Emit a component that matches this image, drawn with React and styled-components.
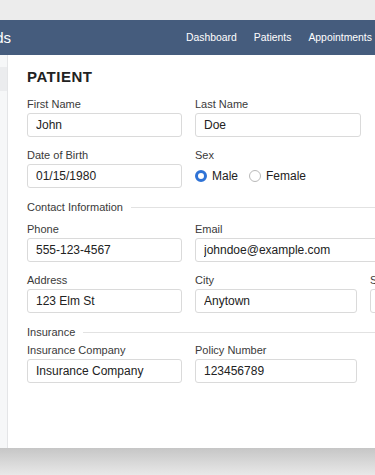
import styled, { createGlobalStyle } from "styled-components"

const Global = createGlobalStyle`
  html, body {
    margin: 0;
    padding: 0;
    background: #ececec;
    overflow: hidden;
  }
  body {
    font-family: "Liberation Sans", Arial, sans-serif;
  }
`

const Page = styled.div`
  display: flex;
  flex-direction: column;
  width: 375px;
  height: 475px;
  overflow: hidden;
`

const TopGap = styled.div`
  flex: none;
  height: 20px;
  background: #ececec;
`

const Window = styled.div`
  flex: none;
  display: flex;
  flex-direction: column;
  width: 480px;
  height: 428px;
  background: #fff;
`

const Header = styled.header`
  flex: none;
  display: flex;
  align-items: center;
  height: 35px;
  background: #455c7d;
  color: #fff;
`

const Brand = styled.div`
  width: 11px;
  overflow: hidden;
  white-space: nowrap;
  direction: rtl;
  font-size: 15px;
`

const Nav = styled.nav`
  display: flex;
  gap: 17px;
  margin-left: 175px;
  font-size: 10.4px;
  white-space: nowrap;
`

const Body = styled.div`
  flex: 1;
  display: flex;
`

const Sidebar = styled.aside`
  flex: none;
  width: 7px;
  background: #f6f7f8;
  border-right: 1px solid #e4e5e7;
  padding-top: 12px;
`

const SideItem = styled.div`
  height: 24px;
  background: ${(p) => (p.$active ? "#ebecee" : "transparent")};
`

const Content = styled.main`
  flex: 1;
  display: flex;
  flex-direction: column;
  padding: 12px 0 0 19px;
  color: #333;
`

const Title = styled.h1`
  margin: 0 0 10px;
  font-size: 15px;
  line-height: 20px;
  font-weight: 700;
  letter-spacing: 0.5px;
  color: #222;
`

const Row = styled.div`
  display: flex;
  gap: 13px;
  margin-bottom: 11px;
`

const Field = styled.div`
  flex: none;
  width: ${(p) => p.$w}px;
  display: flex;
  flex-direction: column;
`

const Label = styled.label`
  font-size: 11px;
  line-height: 14px;
  margin-bottom: 2px;
  color: #3a3a3a;
  white-space: nowrap;
`

const Input = styled.input`
  box-sizing: border-box;
  height: 24px;
  width: 100%;
  padding: 0 8px;
  border: 1px solid #dadada;
  border-radius: 3px;
  font-family: inherit;
  font-size: 12px;
  color: #222;
  background: #fff;
  outline: none;
`

const Radios = styled.div`
  display: flex;
  align-items: center;
  gap: 11px;
  height: 24px;
  font-size: 12px;
  color: #222;
`

const RadioOption = styled.span`
  display: inline-flex;
  align-items: center;
  gap: 5px;
`

const Dot = styled.span`
  box-sizing: border-box;
  width: 12px;
  height: 12px;
  border-radius: 50%;
  background: #fff;
  border: ${(p) => (p.$on ? "3.5px solid #2f73d6" : "1px solid #b9b9b9")};
`

const Section = styled.div`
  display: flex;
  align-items: center;
  gap: 8px;
  margin: 1px 0 ${(p) => p.$after}px;
  font-size: 11px;
  line-height: 14px;
  color: #3a3a3a;

  &::after {
    content: "";
    flex: 1;
    height: 1px;
    background: #e2e2e2;
  }
`

const BottomShade = styled.div`
  flex: none;
  height: 27px;
  background: linear-gradient(#c6c6c6, #e8e8e8);
`

const Text = ({ label, value, w }) => (
  <Field $w={w}>
    <Label>{label}</Label>
    <Input readOnly value={value} />
  </Field>
)

const App = () => {
  return (
    <Page>
      <Global />
      <TopGap />
      <Window>
        <Header>
          <Brand>Patient Records</Brand>
          <Nav>
            <span>Dashboard</span>
            <span>Patients</span>
            <span>Appointments</span>
          </Nav>
        </Header>
        <Body>
          <Sidebar>
            <SideItem $active />
          </Sidebar>
          <Content>
            <Title>PATIENT</Title>
            <Row>
              <Text label="First Name" value="John" w={155} />
              <Text label="Last Name" value="Doe" w={166} />
            </Row>
            <Row>
              <Text label="Date of Birth" value="01/15/1980" w={155} />
              <Field $w={166}>
                <Label>Sex</Label>
                <Radios>
                  <RadioOption>
                    <Dot $on />
                    Male
                  </RadioOption>
                  <RadioOption>
                    <Dot />
                    Female
                  </RadioOption>
                </Radios>
              </Field>
            </Row>
            <Section $after={8}>Contact Information</Section>
            <Row>
              <Text label="Phone" value="555-123-4567" w={155} />
              <Text label="Email" value="johndoe@example.com" w={230} />
            </Row>
            <Row>
              <Text label="Address" value="123 Elm St" w={155} />
              <Text label="City" value="Anytown" w={162} />
              <Text label="State" value="" w={80} />
            </Row>
            <Section $after={4}>Insurance</Section>
            <Row>
              <Text label="Insurance Company" value="Insurance Company" w={155} />
              <Text label="Policy Number" value="123456789" w={162} />
            </Row>
          </Content>
        </Body>
      </Window>
      <BottomShade />
    </Page>
  )
}

export default App
